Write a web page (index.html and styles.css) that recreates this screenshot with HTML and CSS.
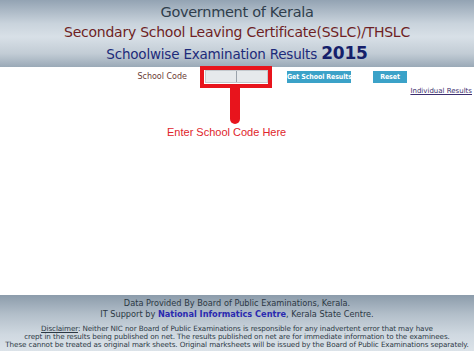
FILE: index.html
```html
<!DOCTYPE html>
<html>
<head>
<meta charset="utf-8">
<link rel="stylesheet" href="styles.css">
</head>
<body>
<div class="page">
  <header class="header">
    <div class="h1">Government of Kerala</div>
    <div class="h2">Secondary School Leaving Certificate(SSLC)/THSLC</div>
    <div class="h3">Schoolwise Examination Results <b class="year">2015</b></div>
  </header>
  <main class="main">
    <div class="form-row">
      <span class="label">School Code</span>
      <div class="highlight">
        <div class="input"><span class="cell"></span><span class="cell"></span></div>
        <div class="pointer"></div>
        <div class="hint">Enter School Code Here</div>
      </div>
      <button class="btn btn-get">Get School Results</button>
      <button class="btn btn-reset">Reset</button>
    </div>
    <div class="link-row"><a class="ind-link" href="#">Individual Results</a></div>
  </main>
  <footer class="footer">
    <div class="f1">Data Provided By Board of Public Examinations, Kerala.</div>
    <div class="f2">IT Support by <span class="nic">National Informatics Centre</span>, Kerala State Centre.</div>
    <div class="disc">
      <div><u>Disclaimer</u>: Neither NIC nor Board of Public Examinations is responsible for any inadvertent error that may have</div>
      <div>crept in the results being published on net. The results published on net are for immediate information to the examinees.</div>
      <div>These cannot be treated as original mark sheets. Original marksheets will be issued by the Board of Public Examinations separately.</div>
    </div>
  </footer>
</div>
</body>
</html>
```

FILE: styles.css
```css
html, body {
  margin: 0;
  padding: 0;
}
body {
  width: 474px;
  height: 351px;
  overflow: hidden;
  background: #ffffff;
  font-family: "DejaVu Sans", Verdana, sans-serif;
}
.page {
  display: flex;
  flex-direction: column;
  height: 351px;
}
.header {
  height: 67px;
  flex: none;
  box-sizing: border-box;
  padding-top: 2px;
  text-align: center;
  background: linear-gradient(to bottom, #93a3b3 0%, #c9d3dc 35%, #d8e0e7 55%, #c2ccd5 80%, #9aa9b7 100%);
}
.h1 {
  font-size: 14.5px;
  line-height: 20px;
  color: #2f3e4c;
  letter-spacing: -0.3px;
}
.h2 {
  font-size: 14px;
  line-height: 20px;
  color: #6e1f24;
  letter-spacing: -0.25px;
}
.h3 {
  font-size: 13.5px;
  line-height: 23px;
  color: #1d2b7a;
  letter-spacing: -0.2px;
}
.year {
  font-size: 17px;
  color: #15206a;
}
.main {
  flex: 1;
  position: relative;
}
.form-row {
  display: flex;
  align-items: center;
  height: 21px;
  margin-top: -1px;
}
.label {
  width: 187px;
  text-align: right;
  font-size: 8px;
  color: #6a3a34;
  margin-right: 13px;
}
.highlight {
  position: relative;
  width: 64px;
  height: 14px;
  border: 4px solid #e8141c;
  background: #fff;
  display: flex;
  align-items: center;
  justify-content: center;
}
.input {
  display: flex;
  width: 61px;
  height: 11px;
  background: #e6e9ec;
  border: 1px solid #c4c9ce;
}
.cell {
  flex: 1;
}
.cell + .cell {
  border-left: 1px solid #9aa2ab;
}
.pointer {
  position: absolute;
  left: 26px;
  top: 18px;
  width: 10px;
  height: 36px;
  background: #e8141c;
  border-radius: 0 0 5px 5px;
}
.hint {
  position: absolute;
  left: -37px;
  top: 56px;
  white-space: nowrap;
  font-family: "Liberation Sans", Arial, sans-serif;
  font-size: 11px;
  color: #e0252b;
}
.btn {
  border: none;
  padding: 0;
  height: 12px;
  background: #3ba2c8;
  color: #ffffff;
  font-family: "DejaVu Sans Condensed", "DejaVu Sans", sans-serif;
  font-weight: bold;
  font-size: 7px;
  white-space: nowrap;
  letter-spacing: -0.1px;
}
.btn-get {
  width: 64px;
  margin-left: 15px;
}
.btn-reset {
  width: 34px;
  margin-left: 22px;
}
.link-row {
  text-align: right;
  padding-right: 2px;
  margin-top: -4px;
  line-height: 9px;
}
.ind-link {
  font-size: 7px;
  color: #3b2e6e;
}
.footer {
  height: 56px;
  flex: none;
  box-sizing: border-box;
  padding-top: 3px;
  text-align: center;
  background: linear-gradient(to bottom, #8c9cab 0%, #b3bfca 35%, #cfd8e0 70%, #dce3e9 100%);
  color: #2c3844;
}
.f1, .f2 {
  font-size: 8.2px;
  line-height: 11px;
}
.nic {
  color: #2a2ab0;
  font-weight: bold;
}
.disc {
  margin-top: 5px;
  font-size: 7.2px;
  line-height: 8px;
  letter-spacing: -0.1px;
  white-space: nowrap;
}
.disc u {
  color: #2c3844;
}
```
